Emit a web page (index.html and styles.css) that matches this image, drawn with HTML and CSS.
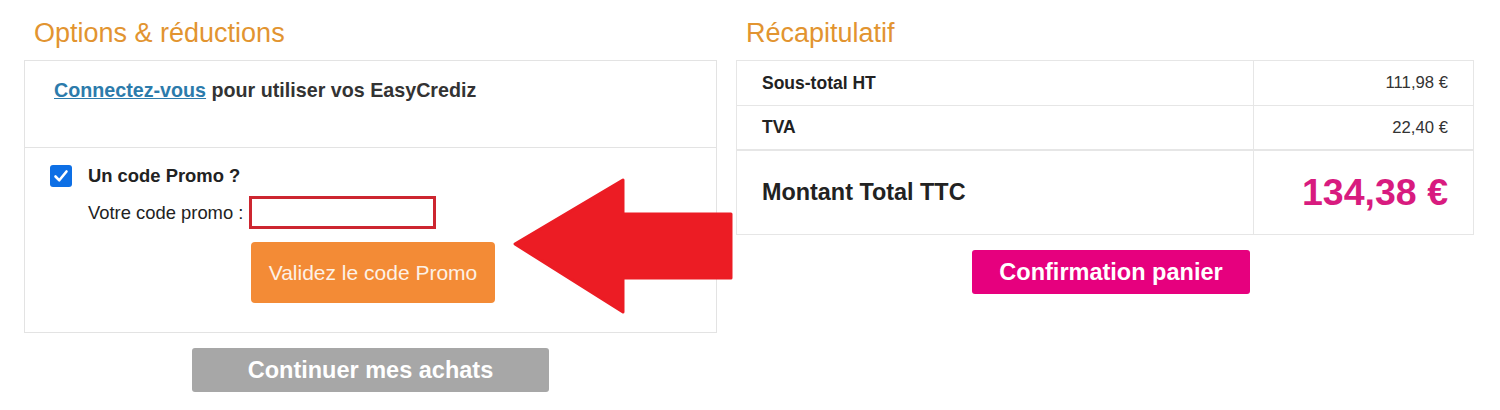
FILE: index.html
```html
<!DOCTYPE html>
<html lang="fr">
<head>
<meta charset="utf-8">
<link rel="stylesheet" href="styles.css">
</head>
<body>
<div class="page">
  <section class="col col-left">
    <h2 class="title">Options &amp; réductions</h2>
    <div class="panel">
      <div class="panel-top">
        <a class="link" href="#">Connectez-vous</a> pour utiliser vos EasyCrediz
      </div>
      <div class="panel-bottom">
        <div class="check-row">
          <span class="checkbox"><svg viewBox="0 0 22 22" width="22" height="22"><path d="M5.5 11.5 L9.3 15.3 L16.5 6.5" fill="none" stroke="#fff" stroke-width="2.6" stroke-linecap="round" stroke-linejoin="round"/></svg></span>
          <span class="check-label">Un code Promo ?</span>
        </div>
        <div class="promo-grid">
          <label class="promo-label">Votre code promo :</label>
          <input class="promo-input" type="text">
          <button class="btn btn-orange">Validez le code Promo</button>
        </div>
      </div>
    </div>
    <div class="center"><button class="btn btn-gray">Continuer mes achats</button></div>
    <svg class="arrow" viewBox="0 0 222 138" width="222" height="138"><path d="M3 67 L111 3 L111 37 L219 37 L219 101 L111 101 L111 135 Z" fill="#ec1c24" stroke="#ec1c24" stroke-width="3" stroke-linejoin="round"/></svg>
  </section>
  <section class="col col-right">
    <h2 class="title">Récapitulatif</h2>
    <table class="recap">
      <tr class="row-small row-first"><td class="lbl">Sous-total HT</td><td class="val">111,98 €</td></tr>
      <tr class="row-small"><td class="lbl">TVA</td><td class="val">22,40 €</td></tr>
      <tr class="row-total"><td class="lbl">Montant Total TTC</td><td class="val">134,38 €</td></tr>
    </table>
    <div class="center center-right"><button class="btn btn-pink">Confirmation panier</button></div>
  </section>
</div>
</body>
</html>
```
FILE: styles.css
```css
html, body { margin: 0; padding: 0; background: #fff; }
body { font-family: "Liberation Sans", Arial, sans-serif; color: #222; }
.page {
  display: grid;
  grid-template-columns: 693px 738px;
  column-gap: 19px;
  padding: 14px 0 0 24px;
}
.col { position: relative; }
.title {
  margin: 0 0 0 10px;
  height: 46px;
  line-height: 38px;
  font-size: 27px;
  font-weight: normal;
  color: #e29430;
}
.panel { border: 1px solid #e3e3e3; }
.panel-top {
  height: 87px;
  box-sizing: border-box;
  padding: 18px 0 0 29px;
  font-size: 19.7px;
  line-height: 23px;
  font-weight: bold;
  color: #333;
  border-bottom: 1px solid #e3e3e3;
}
.link { color: #2c7bab; text-decoration: underline; }
.panel-bottom {
  height: 184px;
  box-sizing: border-box;
  padding: 17px 0 0 25px;
}
.check-row { display: flex; align-items: center; gap: 16px; }
.checkbox {
  width: 22px; height: 22px;
  border-radius: 3px;
  background: #0d6fe5;
  display: inline-flex;
}
.check-label { font-size: 18.4px; font-weight: bold; color: #222; }
.promo-grid {
  display: grid;
  grid-template-columns: 161px 187px;
  row-gap: 13px;
  margin: 9px 0 0 38px;
  align-items: center;
}
.promo-label { font-size: 18.4px; color: #222; white-space: nowrap; }
.promo-input {
  box-sizing: border-box;
  width: 187px;
  height: 33px;
  border: 3px solid #cd2630;
  margin: 0;
  padding: 0;
  outline: none;
}
.btn {
  border: 0;
  font-family: "Liberation Sans", Arial, sans-serif;
  color: #fff;
  cursor: pointer;
  padding: 0;
}
.btn-orange {
  grid-column: 2;
  justify-self: start;
  margin-left: 2px;
  width: 244px;
  height: 61px;
  background: #f38b36;
  border-radius: 4px;
  font-size: 21px;
  color: #fdf1e6;
  white-space: nowrap;
}
.center { display: flex; justify-content: center; margin-top: 15px; }
.btn-gray {
  width: 357px;
  height: 44px;
  background: #a7a7a7;
  border-radius: 3px;
  font-size: 23.5px;
  font-weight: bold;
}
.arrow { position: absolute; left: 488px; top: 163px; }
.recap {
  width: 738px;
  border-collapse: collapse;
  border: 1px solid #e6e6e6;
}
.recap td { border: 1px solid #e6e6e6; padding: 0 25px; }
.recap .lbl { width: 466px; font-weight: bold; color: #222; }
.recap .val { text-align: right; }
.row-small td { height: 43px; font-size: 17.5px; }
.row-first td { height: 44px; }
.row-small .val { color: #333; font-size: 16.7px; }
.row-total td { height: 83px; border-top: 2px solid #e6e6e6; }
.row-total .lbl { font-size: 23.4px; }
.row-total .val { font-size: 37.5px; font-weight: bold; color: #d81b7f; }
.center-right { margin-top: 15px; padding-left: 12px; }
.btn-pink {
  width: 278px;
  height: 44px;
  background: #e6007e;
  border-radius: 3px;
  font-size: 23.5px;
  font-weight: bold;
}
```
